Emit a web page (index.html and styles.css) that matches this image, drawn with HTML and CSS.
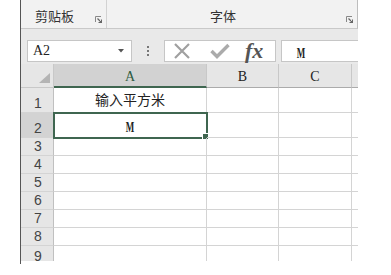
FILE: index.html
```html
<!DOCTYPE html>
<html>
<head>
<meta charset="utf-8">
<link rel="stylesheet" href="styles.css">
</head>
<body>
<div class="excel">
  <div class="ribbon">
    <div class="group g1"><span class="glabel">剪贴板</span><span class="launcher"><svg width="7" height="7" viewBox="0 0 7 7"><path d="M0.5 6V0.5H6" fill="none" stroke="#888" stroke-width="1"/><path d="M2.5 2.5L6.5 6.5M6.5 3.5V6.5H3.5" fill="none" stroke="#666" stroke-width="1.2"/></svg></span></div>
    <div class="group g2"><span class="glabel">字体</span><span class="launcher"><svg width="7" height="7" viewBox="0 0 7 7"><path d="M0.5 6V0.5H6" fill="none" stroke="#888" stroke-width="1"/><path d="M2.5 2.5L6.5 6.5M6.5 3.5V6.5H3.5" fill="none" stroke="#666" stroke-width="1.2"/></svg></span></div>
  </div>
  <div class="fbar">
    <div class="namebox"><span class="ref">A2</span><svg class="arrow" width="6" height="4" viewBox="0 0 6 4"><path d="M0 0H6L3 3.5Z" fill="#555"/></svg></div>
    <div class="dots"><i></i><i></i><i></i></div>
    <div class="btns">
      <svg class="ico" width="18" height="16" viewBox="0 0 18 16"><path d="M2 1L16 15M16 1L2 15" stroke="#a0a0a0" stroke-width="2.2" fill="none"/></svg>
      <svg class="ico" width="20" height="16" viewBox="0 0 20 16"><path d="M1.5 8L7 13.5L18.5 2" stroke="#ababab" stroke-width="3.4" fill="none"/></svg>
      <span class="fx">fx</span>
    </div>
    <div class="finput"><span class="narrow">M</span></div>
  </div>
  <div class="sheet">
    <div class="corner"><svg width="11" height="10" viewBox="0 0 11 10"><path d="M11 0V10H0Z" fill="#b4b4b4"/></svg></div>
    <div class="ch sel">A</div>
    <div class="ch">B</div>
    <div class="ch">C</div>
    <div class="ch last"></div>

    <div class="rh tall">1</div>
    <div class="c tall txt">输入平方米</div>
    <div class="c tall"></div><div class="c tall"></div><div class="c tall last"></div>

    <div class="rh tall selr">2</div>
    <div class="c tall active"><span class="narrow">M</span><span class="handle"></span></div>
    <div class="c tall"></div><div class="c tall"></div><div class="c tall last"></div>

    <div class="rh">3</div><div class="c"></div><div class="c"></div><div class="c"></div><div class="c last"></div>
    <div class="rh">4</div><div class="c"></div><div class="c"></div><div class="c"></div><div class="c last"></div>
    <div class="rh">5</div><div class="c"></div><div class="c"></div><div class="c"></div><div class="c last"></div>
    <div class="rh">6</div><div class="c"></div><div class="c"></div><div class="c"></div><div class="c last"></div>
    <div class="rh">7</div><div class="c"></div><div class="c"></div><div class="c"></div><div class="c last"></div>
    <div class="rh">8</div><div class="c"></div><div class="c"></div><div class="c"></div><div class="c last"></div>
    <div class="rh cut">9</div><div class="c cut"></div><div class="c cut"></div><div class="c cut"></div><div class="c cut last"></div>
  </div>
</div>
</body>
</html>
```

FILE: styles.css
```css
html, body {
  margin: 0;
  padding: 0;
  background: #ffffff;
}
body {
  width: 391px;
  height: 275px;
  overflow: hidden;
  font-family: "Noto Sans CJK SC", "Liberation Sans", sans-serif;
}
.excel {
  margin-left: 20px;
  width: 337px;
  border-left: 1px solid #555;
  height: 264px;
  overflow: hidden;
  display: flex;
  flex-direction: column;
}
.ribbon {
  height: 30px;
  background: #f2f2f2;
  border-bottom: 1px solid #c9c9c9;
  display: flex;
  border-right: 1px solid #bdbdbd;
}
.group {
  position: relative;
  display: flex;
  align-items: flex-end;
  padding-bottom: 2px;
  box-sizing: border-box;
}
.g1 {
  width: 86px;
  border-right: 1px solid #d2d2d2;
  padding-left: 14px;
}
.g2 {
  flex: 1;
  padding-left: 103px;
}
.glabel {
  font-size: 13px;
  line-height: 20px;
  color: #333;
}
.launcher {
  position: absolute;
  right: 4px;
  bottom: 5px;
  height: 7px;
  width: 7px;
  line-height: 0;
}
.fbar {
  height: 37px;
  background: #e9e9e9;
  display: flex;
  align-items: flex-start;
  padding-top: 11px;
  box-sizing: border-box;
}
.namebox {
  margin-left: 6px;
  width: 105px;
  height: 22px;
  box-sizing: border-box;
  background: #fff;
  border: 1px solid #c6c6c6;
  display: flex;
  align-items: center;
  padding-left: 5px;
  padding-right: 7px;
}
.ref {
  font-family: "Liberation Serif", serif;
  font-size: 14px;
  color: #222;
  flex: 1;
}
.arrow { display: block; }
.dots {
  width: 32px;
  height: 22px;
  display: flex;
  flex-direction: column;
  align-items: center;
  justify-content: center;
  gap: 2px;
}
.dots i {
  display: block;
  width: 2px;
  height: 2px;
  background: #777;
}
.btns {
  width: 112px;
  height: 22px;
  box-sizing: border-box;
  background: #fff;
  border: 1px solid #c6c6c6;
  display: flex;
  align-items: center;
  padding-left: 8px;
  gap: 19px;
}
.ico { display: block; }
.fx {
  font-family: "Liberation Serif", serif;
  font-style: italic;
  font-weight: bold;
  font-size: 22px;
  color: #555;
  line-height: 20px;
  margin-left: -4px;
}
.finput {
  margin-left: 5px;
  flex: 1;
  height: 22px;
  box-sizing: border-box;
  background: #fff;
  border: 1px solid #c6c6c6;
  border-right: none;
  line-height: 20px;
  padding-left: 12px;
  color: #222;
}
.narrow {
  display: inline-block;
  font-family: "Liberation Serif", serif;
  font-weight: bold;
  font-size: 15px;
  transform: scaleX(0.6);
  color: #222;
}
.sheet {
  display: grid;
  grid-template-columns: 33px 153px 72px 73px 6px;
  grid-auto-rows: 18px;
  grid-template-rows: 24px 25px 25px;
}
.corner {
  background: #e6e6e6;
  border-right: 1px solid #c8c8c8;
  border-bottom: 1px solid #c8c8c8;
  display: flex;
  align-items: flex-end;
  justify-content: flex-end;
  padding: 0 3px 4px 0;
}
.ch {
  background: #e6e6e6;
  border-right: 1px solid #c8c8c8;
  border-bottom: 1px solid #ababab;
  font-family: "Liberation Serif", serif;
  font-size: 14px;
  color: #222;
  text-align: center;
  line-height: 22px;
  padding-top: 2px;
  box-sizing: border-box;
}
.ch.sel {
  background: #d2d2d2;
  border-bottom: 2px solid #3f6650;
  color: #2c5a40;
}
.rh {
  background: #e6e6e6;
  border-right: 1px solid #c0c0c0;
  border-bottom: 1px solid #d4d4d4;
  font-family: "Liberation Sans", sans-serif;
  font-size: 14px;
  color: #444;
  display: flex;
  align-items: flex-end;
  justify-content: center;
  line-height: 17px;
  padding-left: 2px;
  box-sizing: border-box;
}
.rh.selr {
  background: #d3d3d3;
}
.c {
  border-right: 1px solid #d4d4d4;
  border-bottom: 1px solid #d4d4d4;
  box-sizing: border-box;
  position: relative;
}
.last { border-right: none; }
.txt {
  font-size: 14px;
  text-align: center;
  line-height: 22px;
  color: #222;
}
.active {
  outline: 2px solid #3f6650;
  outline-offset: -1px;
  text-align: center;
  line-height: 24px;
}
.handle {
  position: absolute;
  right: -3px;
  bottom: -3px;
  width: 5px;
  height: 5px;
  background: #3f6650;
  border: 1px solid #fff;
}
.cut { height: 15px; border-bottom: none; }
.rh.cut { align-items: flex-start; line-height: 14px; overflow: hidden; padding-top: 3px; }
```
